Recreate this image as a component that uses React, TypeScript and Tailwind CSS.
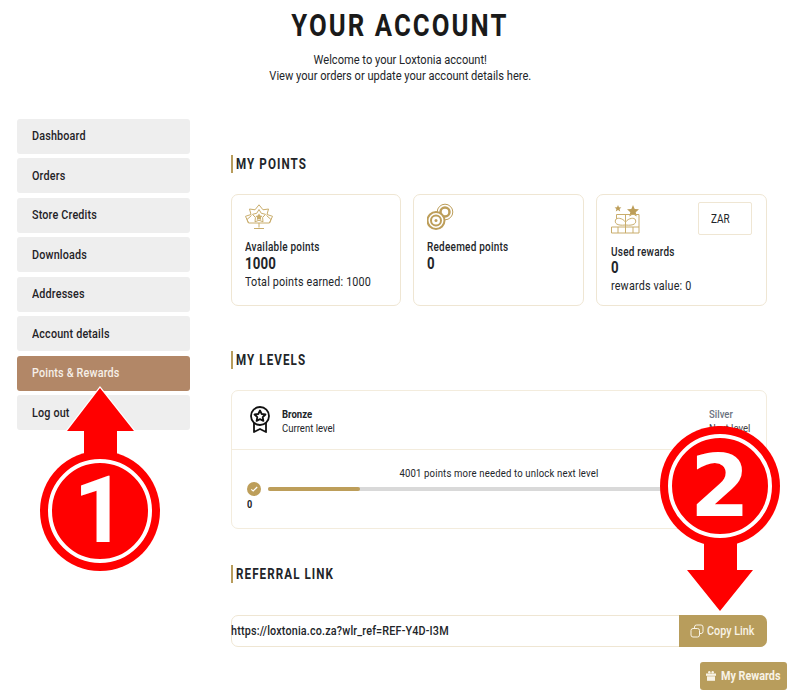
const nav = ["Dashboard", "Orders", "Store Credits", "Downloads", "Addresses", "Account details", "Points & Rewards", "Log out"];

function Cond({ children, className = "" }: { children: React.ReactNode; className?: string }) {
  return <span className={`inline-block origin-left scale-x-[0.83] whitespace-nowrap ${className}`}>{children}</span>;
}

function Heading({ children }: { children: React.ReactNode }) {
  return (
    <div className="h-[18px] border-l-[2px] border-[#b89d5c] pl-[3px] flex items-center">
      <Cond className="text-[14px] font-bold tracking-[1.3px] text-[#222529]">{children}</Cond>
    </div>
  );
}

function StarIcon() {
  return (
    <svg width="28" height="26" viewBox="0 0 28 26" fill="none" stroke="#c9ad6c" strokeWidth="1" strokeLinejoin="round">
      <path d="M14 .8l4 5 5.500-.8-1.500 5.500 5.500 1.800L24.500 19H3.500L.5 12.300 6 10.500 4.500 5l5.500.8z" fill="#fff" />
      <path d="M6.500 11.500L2 15.500l1.500 3.500M21.500 11.500l4.500 4-1.500 3.500" />
      <path d="M14 5.500l2.300 3.800 4.200 1-2.900 3.200.4 4.300L14 16.200l-4 1.600.4-4.300-2.900-3.200 4.200-1z" />
      <path d="M14 9.500l1.200 2 2.300.4-1.600 1.700.3 2.300-2.200-1-2.200 1 .3-2.300-1.600-1.700 2.300-.4z" fill="#c9ad6c" stroke="none" />
      <path d="M14 19v4.500M9 24.500h10" />
    </svg>
  );
}

function CoinsIcon() {
  return (
    <svg width="27" height="27" viewBox="0 0 27 27" fill="none" stroke="#bd9e5a">
      <circle cx="18" cy="9" r="7.800" strokeWidth="1" fill="#fff" />
      <circle cx="18" cy="9" r="4.500" strokeWidth="2.500" />
      <circle cx="9" cy="17.500" r="8.500" strokeWidth="2" fill="#fff" />
      <circle cx="9" cy="17.500" r="5" strokeWidth="2" />
      <circle cx="9" cy="17.500" r="1.500" fill="#bd9e5a" stroke="none" />
    </svg>
  );
}

function GiftIcon() {
  return (
    <svg width="29" height="29" viewBox="0 0 29 29" fill="none" stroke="#c9ad6c" strokeWidth="1">
      <path d="M7 0l1 2.200 2.400.2-1.800 1.600.6 2.400L7 5.100 4.800 6.400l.6-2.400L3.600 2.400 6 2.200z" fill="#bd9e5a" stroke="none" />
      <path d="M22 0l1.700 3.900 4.300.4-3.300 2.900 1 4.200L22 9.200l-3.700 2.200 1-4.200L16 4.300l4.300-.4z" fill="#bd9e5a" stroke="none" />
      <path d="M5.500 15v-5.500h22.500v18.500H.5v-6h27.500M14.500 9.500V28M7 22v6M22 22v6" />
      <path d="M14.500 17c-3-4-9-5-10-2s1 6 10 5c9 1 11-2 10-5s-7-2-10 2z" fill="#fff" />
      <path d="M14.500 17v5" />
    </svg>
  );
}

function RibbonIcon() {
  return (
    <svg width="22" height="28" viewBox="0 0 22 28" fill="none" stroke="#111" strokeWidth="1.800" strokeLinejoin="round">
      <circle cx="11" cy="10" r="9" />
      <path d="M11 4.500l1.700 3.500 3.800.5-2.800 2.600.7 3.800-3.400-1.800-3.400 1.800.7-3.800L5.500 8.500l3.800-.5z" />
      <path d="M5 17v9l6-3 6 3v-9" />
    </svg>
  );
}

function PointCard({ icon, label, value, note, extra, tall }: { icon: React.ReactNode; label: string; value: string; note?: string; extra?: React.ReactNode; tall?: boolean }) {
  return (
    <div className={`relative h-[112px] flex-1 rounded-[7px] border border-[#efe6d3] pt-[8px] ${tall ? "pl-[14px]" : "pl-[13px]"}`}>
      <div className={`flex items-center ${tall ? "h-[32px]" : "h-[27px]"}`}>{icon}</div>
      <div className={`mt-[9px] leading-[14px] ${tall ? "h-[14px]" : "h-[15px]"}`}>
        <Cond className="text-[12px] font-medium tracking-[0.3px] text-[#222529]">{label}</Cond>
      </div>
      <div className="h-[17px] leading-[20px]">
        <Cond className="text-[16px] font-bold tracking-[0.2px] text-[#222529]">{value}</Cond>
      </div>
      {note && (
        <div className="h-[20px] leading-[20px]">
          <Cond className="text-[13px] tracking-[0.2px] text-[#222529]">{note}</Cond>
        </div>
      )}
      {extra}
    </div>
  );
}

export default function App() {
  return (
    <div className="relative w-[800px] h-[700px] overflow-hidden bg-white font-['Roboto',sans-serif] text-[#222529]">
      <header className="flex flex-col items-center pt-[7px]">
        <h1 className="h-[38px] leading-[38px] text-[31px] font-bold tracking-[2.5px] text-[#1a1a1a] scale-x-[0.83] whitespace-nowrap">YOUR ACCOUNT</h1>
        <p className="mt-[6px] text-[13.500px] leading-[16px] text-center text-[#222529] scale-x-[0.822] whitespace-nowrap">
          Welcome to your Loxtonia account!
          <br />
          View your orders or update your account details here.
        </p>
      </header>

      <div className="mt-[36px] flex pl-[17px] pr-[33px]">
        <nav className="-mt-[0.4px] w-[173px] flex flex-col gap-[4.500px]">
          {nav.map((n) => (
            <div
              key={n}
              className={`h-[35px] rounded-[3px] pl-[14.500px] flex items-center ${n === "Points & Rewards" ? "bg-[#b28767] text-[#f6efe8]" : "bg-[#eeeeee] text-[#1f2226]"}`}
            >
              <Cond className="text-[13px] font-medium tracking-[0.2px]">{n}</Cond>
            </div>
          ))}
        </nav>

        <main className="ml-[41px] flex-1 pt-[36px]">
          <Heading>MY POINTS</Heading>
          <div className="mt-[21px] flex gap-[12px]">
            <PointCard icon={<StarIcon />} label="Available points" value="1000" note="Total points earned: 1000" />
            <PointCard icon={<CoinsIcon />} label="Redeemed points" value="0" />
            <PointCard
              tall
              icon={<GiftIcon />}
              label="Used rewards"
              value="0"
              note="rewards value: 0"
              extra={
                <div className="absolute right-[14px] top-[7px] w-[54px] h-[33px] rounded-[2px] border border-[#efe6d3] pl-[12px] flex items-center">
                  <Cond className="text-[12px] text-[#222529]">ZAR</Cond>
                </div>
              }
            />
          </div>

          <div className="mt-[45px]">
            <Heading>MY LEVELS</Heading>
          </div>
          <div className="mt-[21px] h-[139px] rounded-[7px] border border-[#f3ecdd] flex flex-col">
            <div className="h-[59px] border-b border-[#f3ecdd] flex items-center justify-between pl-[17px] pr-[15px]">
              <div className="flex items-center gap-[11px]">
                <RibbonIcon />
                <div className="leading-[14px]">
                  <div className="h-[14px]"><Cond className="text-[11.500px] font-bold">Bronze</Cond></div>
                  <div className="h-[14px]"><Cond className="text-[11.500px]">Current level</Cond></div>
                </div>
              </div>
              <div className="leading-[14px] w-[42px]">
                <div className="h-[14px]"><Cond className="text-[11.500px] font-medium text-[#6b7280]">Silver</Cond></div>
                <div className="h-[14px]"><Cond className="text-[11.500px] text-[#444]">Next level</Cond></div>
              </div>
            </div>
            <div className="flex-1 pt-[15px] pl-[15px] pr-[15px] relative">
              <div className="text-center leading-[14px]">
                <span className="inline-block scale-x-[0.83] text-[11.500px] tracking-[0.2px] whitespace-nowrap">4001 points more needed to unlock next level</span>
              </div>
              <div className="mt-[2px] flex items-center">
                <div className="w-[14px] h-[14px] rounded-full bg-[#bd9e5a] flex items-center justify-center">
                  <svg width="8" height="8" viewBox="0 0 10 10" fill="none" stroke="#fff" strokeWidth="1.500"><path d="M1.500 5.500l2.500 2 5-5" /></svg>
                </div>
                <div className="ml-[7px] flex-1 h-[4px] rounded-full bg-[#d9d9d9]">
                  <div className="w-[92px] h-[4px] rounded-full bg-[#bd9e5a]" />
                </div>
              </div>
              <div className="leading-[14px]">
                <Cond className="text-[11px] font-bold">0</Cond>
              </div>
            </div>
          </div>

          <div className="mt-[36px]">
            <Heading>REFERRAL LINK</Heading>
          </div>
          <div className="mt-[32px] h-[32px] rounded-[7px] border border-[#efe6d3] flex items-center justify-between">
            <Cond className="-ml-px text-[13px] font-medium tracking-[0.2px] text-[#222529]">https://loxtonia.co.za?wlr_ref=REF-Y4D-I3M</Cond>
            <div className="w-[88px] h-[32px] -mr-px rounded-r-[7px] bg-[#b89d5c] flex items-center pl-[11px] gap-[3px] text-[#f8f3e6]">
              <svg className="shrink-0" width="14" height="14" viewBox="0 0 14 14" fill="none" stroke="#f8f3e6" strokeWidth="1">
                <rect x="4.500" y="1" width="8.500" height="8.500" rx="2" />
                <rect x="1" y="4.500" width="8.500" height="8.500" rx="2" fill="#b89d5c" />
              </svg>
              <Cond className="text-[13px] font-medium">Copy Link</Cond>
            </div>
          </div>
        </main>
      </div>

      <div className="absolute left-[700px] top-[662px] w-[87px] h-[28px] rounded-[3px] bg-[#b89d5c] flex items-center pl-[6px] gap-[5px] text-[#f8f3e6]">
        <svg className="shrink-0" width="10" height="10" viewBox="0 0 10 10" fill="#f8f3e6">
          <rect x="0" y="2.500" width="10" height="2.300" />
          <rect x="1" y="5.300" width="8" height="4.500" />
          <circle cx="3.300" cy="1.300" r="1.200" />
          <circle cx="6.700" cy="1.300" r="1.200" />
        </svg>
        <Cond className="text-[13px] font-bold">My Rewards</Cond>
      </div>

      {/* Annotation 1 */}
      <svg className="absolute left-[60px] top-[384px]" width="80" height="80" viewBox="0 0 80 80">
        <path d="M40 4L7 47H24V76H57V47H74Z" fill="#ff0000" stroke="#fff" strokeWidth="2.500" strokeLinejoin="miter" paintOrder="stroke" />
      </svg>
      <div className="absolute left-[40px] top-[451px] w-[120px] h-[120px] rounded-full bg-[#ff0000] flex items-center justify-center">
        <div className="w-[104px] h-[104px] rounded-full border-[4px] border-white flex items-center justify-center text-white font-['Roboto',sans-serif] font-bold text-[92px] leading-none">1</div>
      </div>

      {/* Annotation 2 */}
      <svg className="absolute left-[680px] top-[530px]" width="80" height="84" viewBox="0 0 80 84">
        <path d="M24 0V40H7L40 81L73 40H57V0Z" fill="#ff0000" />
      </svg>
      <div className="absolute left-[660px] top-[426px] w-[120px] h-[120px] rounded-full bg-[#ff0000] flex items-center justify-center">
        <div className="w-[104px] h-[104px] rounded-full border-[4px] border-white flex items-center justify-center text-white font-['DejaVu_Sans',sans-serif] font-bold text-[86px] leading-none">2</div>
      </div>
    </div>
  );
}
